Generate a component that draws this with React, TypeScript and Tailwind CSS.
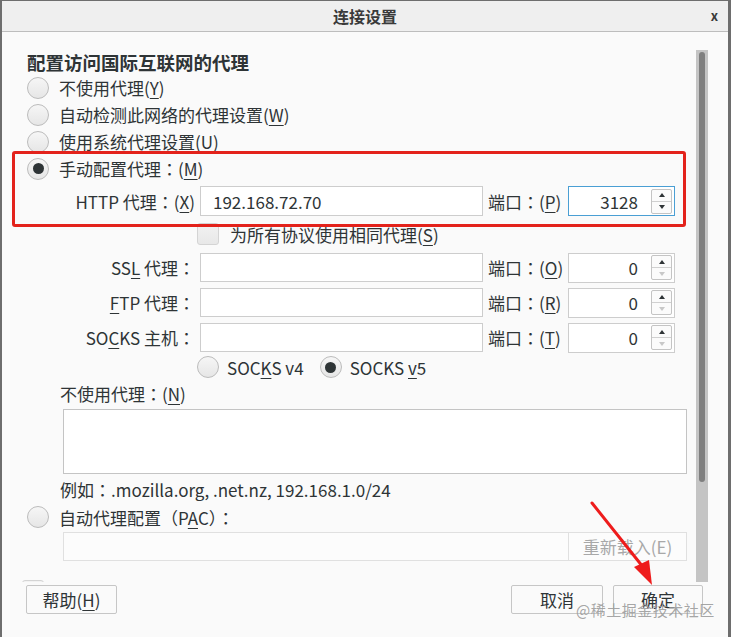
import type { ReactNode } from 'react';

const FONT = { fontFamily: '"Noto Sans CJK SC", "Noto Sans", "Liberation Sans", sans-serif' };

// full-width colon, centred in its cell as in the reference
const C = <span className="font-['Noto_Sans_CJK_JP',sans-serif]">：</span>;

function Radio({ checked = false }: { checked?: boolean }) {
  return (
    <div className="w-[22px] h-[22px] rounded-full border border-[#bcbcbc] bg-gradient-to-b from-[#f6f6f6] to-[#e6e6e6] flex items-center justify-center flex-shrink-0">
      {checked && <div className="w-[11px] h-[11px] rounded-full bg-[#2e3436]" />}
    </div>
  );
}

function Checkbox() {
  return (
    <div className="w-[22px] h-[22px] rounded-[3px] border border-[#d4d4d4] bg-gradient-to-b from-[#f2f2f2] to-[#e8e8e8] flex-shrink-0" />
  );
}

function U({ children }: { children: ReactNode }) {
  return <span className="underline underline-offset-[3px] decoration-1">{children}</span>;
}

function Tri({ up, dim }: { up?: boolean; dim?: boolean }) {
  return (
    <svg width="6" height="4" viewBox="0 0 6 4">
      <path d={up ? 'M0 4 L3 0 L6 4 Z' : 'M0 0 L3 4 L6 0 Z'} fill={dim ? '#c8c8c8' : '#2e3436'} />
    </svg>
  );
}

function Spin({ value, focused = false }: { value: string; focused?: boolean }) {
  return (
    <div
      className={`w-[107px] h-[30px] bg-white flex items-center border ${
        focused ? 'border-[#4a9fd4]' : 'border-[#cdcdcd]'
      }`}
    >
      <span className="flex-1 text-right pr-[13px]">{value}</span>
      <div className="w-[21px] h-[25px] mr-[2px] flex flex-col border border-[#c4c4c4] rounded-[2px] bg-[#fbfbfb]">
        <div className="flex-1 flex items-center justify-center border-b border-[#d0d0d0]">
          <Tri up />
        </div>
        <div className="flex-1 flex items-center justify-center">
          <Tri dim={!focused} />
        </div>
      </div>
    </div>
  );
}

function ProxyRow({ label, value, port, portVal, focused, cls }: {
  label: ReactNode;
  value?: string;
  port: ReactNode;
  portVal: string;
  focused?: boolean;
  cls: string;
}) {
  return (
    <div className={`flex items-center ${cls}`}>
      <div className="w-[170px] text-right pr-[2px] whitespace-nowrap">{label}</div>
      <div className="ml-[3px] w-[283px] h-full bg-white border border-[#cdcdcd] flex items-center px-[12px]">
        {value}
      </div>
      <div className="ml-[5px] w-[75px] whitespace-nowrap">{port}</div>
      <div className="ml-[5px]">
        <Spin value={portVal} focused={focused} />
      </div>
    </div>
  );
}

export default function App() {
  return (
    <div
      className="relative w-[731px] h-[637px] overflow-hidden bg-[#fafafa] text-[#2e3436] text-[17px] leading-none border-t border-l-2 border-r-[3px] border-[#6e6e6e]"
      style={FONT}
    >
      {/* Title bar */}
      <div className="relative h-[31px] bg-[#efefef] border-b border-[#bdbdbd] flex items-center justify-center">
        <span className="text-[16px] font-bold text-[#3a3a3a]">连接设置</span>
        <span className="absolute right-[10px] top-[8px] text-[13px] font-bold text-[#3a3a3a]">x</span>
      </div>

      {/* Middle scrolled area */}
      <div className="flex h-[550px]">
        <div className="w-[694px] h-full overflow-hidden pl-[25px] pt-[18px]">
          <div className="h-[24px] flex items-center text-[18.5px] font-bold">配置访问国际互联网的代理</div>
          {[
            <>不使用代理(<U>Y</U>)</>,
            <>自动检测此网络的代理设置(<U>W</U>)</>,
            <>使用系统代理设置(<U>U</U>)</>,
            <>手动配置代理{C}(<U>M</U>)</>,
          ].map((t, i) => (
            <div key={i} className="h-[27px] flex items-center gap-[10px]">
              <Radio checked={i === 3} />
              <span>{t}</span>
            </div>
          ))}

          <ProxyRow
            cls="mt-[4px] h-[30px]"
            label={<>HTTP 代理{C}(<U>X</U>)</>}
            value="192.168.72.70"
            port={<>端口{C}(<U>P</U>)</>}
            portVal="3128"
            focused
          />

          <div className="mt-[2px] h-[32px] flex items-center pl-[170px] gap-[11px]">
            <Checkbox />
            <span>为所有协议使用相同代理(<U>S</U>)</span>
          </div>

          <ProxyRow
            cls="mt-[3px] h-[29px]"
            label={<>SS<U>L</U> 代理{C}</>}
            port={<>端口{C}(<U>O</U>)</>}
            portVal="0"
          />
          <ProxyRow
            cls="mt-[6px] h-[29px]"
            label={<><U>F</U>TP 代理{C}</>}
            port={<>端口{C}(<U>R</U>)</>}
            portVal="0"
          />
          <ProxyRow
            cls="mt-[6px] h-[29px]"
            label={<>SO<U>C</U>KS 主机{C}</>}
            port={<>端口{C}(<U>T</U>)</>}
            portVal="0"
          />

          <div className="mt-[3px] h-[24px] flex items-center pl-[170px]">
            <Radio />
            <span className="ml-[8px]">SOC<U>K</U>S v4</span>
            <div className="ml-[16px]">
              <Radio checked />
            </div>
            <span className="ml-[8px]">SOCKS <U>v</U>5</span>
          </div>

          <div className="mt-[3px] h-[22px] flex items-center pl-[33px]">不使用代理{C}(<U>N</U>)</div>
          <div className="mt-[5px] ml-[36px] w-[624px] h-[65px] bg-white border border-[#c4c4c4]" />
          <div className="mt-[4px] h-[22px] flex items-center pl-[33px]">例如{C}.mozilla.org, .net.nz, 192.168.1.0/24</div>

          <div className="mt-[5px] h-[24px] flex items-center gap-[10px]">
            <Radio />
            <span>自动代理配置（P<U>A</U>C）{C}</span>
          </div>
          <div className="mt-[3px] ml-[36px] w-[624px] h-[29px] bg-[#fcfcfc] border border-[#e0e0e0] flex">
            <div className="flex-1" />
            <div className="w-[118px] border-l border-[#e0e0e0] flex items-center justify-center text-[#a8a8a8]">
              重新载入(E)
            </div>
          </div>

          <div className="mt-[19px] -ml-[5px]">
            <Checkbox />
          </div>
        </div>

        {/* Scrollbar */}
        <div className="w-[12px] pt-[18px] h-full">
          <div className="h-full bg-[#c4c4c4] pt-[2px] flex justify-center">
            <div className="w-[6px] h-[430px] rounded-full bg-[#7f7f7f]" />
          </div>
        </div>
      </div>

      {/* Button bar */}
      <div className="flex items-start pt-[3px] pl-[24px]">
        <div className="w-[91px] h-[29px] border border-[#c6c6c6] rounded-[2px] bg-[#fafafa] flex items-center justify-center">
          帮助(<U>H</U>)
        </div>
        <div className="ml-auto w-[92px] h-[29px] border border-[#c6c6c6] rounded-[2px] bg-[#fafafa] flex items-center justify-center">
          取消
        </div>
        <div className="ml-[10px] mr-[25px] w-[90px] h-[29px] border border-[#c6c6c6] rounded-[2px] bg-[#fafafa] flex items-center justify-center">
          确定
        </div>
      </div>

      {/* Annotation: red box */}
      <div className="absolute left-[10px] top-[150px] w-[674px] h-[76px] border-[3px] border-[#e3221b] rounded-[3px]" />

      {/* Annotation: red arrow */}
      <svg className="absolute left-0 top-0 pointer-events-none" width="731" height="637">
        <line x1="590" y1="502" x2="641" y2="566" stroke="#ee1c1c" strokeWidth="3" strokeLinecap="round" />
        <path d="M632 566 L650 584 L647 559 Z" fill="#ee1c1c" />
      </svg>

      {/* Watermark */}
      <div className="absolute left-[574px] top-[601px] text-[15px] text-[#9a9a9a]/90 tracking-[0.5px]">
        @稀土掘金技术社区
      </div>
    </div>
  );
}
